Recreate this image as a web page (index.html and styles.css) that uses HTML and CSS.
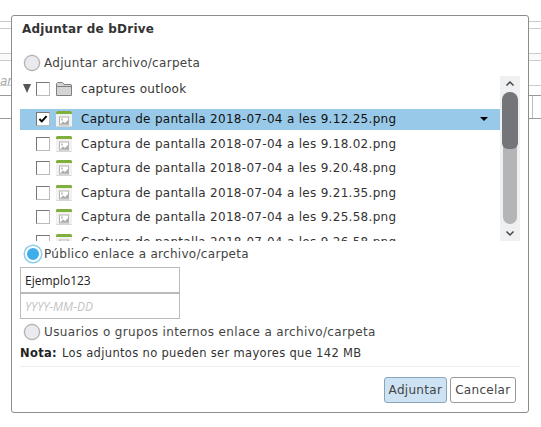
FILE: index.html
```html
<!DOCTYPE html>
<html lang="en">
<head>
  <meta charset="UTF-8"/>
  <title>Adjuntar de bDrive</title>
  <link rel="stylesheet" href="styles.css">
</head>
<body>

  <svg width="0" height="0" class="defs">
    <symbol id="img-file" viewBox="0 0 16 16">
      <rect x="0" y="0" width="16" height="16" rx="1.5" fill="#f1f1ef"/>
      <rect x="0.5" y="15" width="15" height="1" fill="#d6d6d4"/>
      <path d="M0 3V1.5A1.5 1.5 0 0 1 1.5 0h13A1.5 1.5 0 0 1 16 1.5V3z" fill="#7fb03c"/>
      <rect x="3.5" y="6" width="9" height="8" fill="#fff" stroke="#b4b4b4"/>
      <path d="M4 13.5l3-3 2 1.5 3-3v4.5z" fill="#aaa"/>
      <rect x="5" y="7.5" width="2" height="2" fill="#c4c4c4"/>
    </symbol>
  </svg>

  <div class="page-behind">
    <div class="bg-row"></div>
    <div class="bg-row"></div>
    <div class="bg-row bg-tall"><span class="bg-text">ar</span></div>
    <div class="bg-row bg-last"><span class="bg-cell"></span></div>
  </div>

  <div class="dialog">
    <h3 class="dialog-title">Adjuntar de bDrive</h3>

    <label class="radio-line first"><span class="radio"></span>Adjuntar archivo/carpeta</label>

    <div class="file-area">
      <div class="tree">
        <div class="row folder-row">
          <span class="arrow"></span>
          <span class="check"></span>
          <svg class="icon" viewBox="0 0 16 14" width="16" height="14">
            <path d="M.5 13.5V1.5l1-1h5l1.500 2h7l.5 .5v10.500z" fill="#d4d4d4" stroke="#808080"/>
            <path d="M.5 4.500h15" stroke="#808080" fill="none"/>
          </svg>
          <span class="name">captures outlook</span>
        </div>
        <div class="row selected">
          <span class="check checked"><svg viewBox="0 0 12 10" width="10" height="8"><path d="M1.500 5l3 3 6-6.500" fill="none" stroke="#000" stroke-width="2.400"/></svg></span>
          <svg class="icon"><use href="#img-file"/></svg>
          <span class="name">Captura de pantalla 2018-07-04 a les 9.12.25.png</span>
          <span class="row-menu"></span>
        </div>
        <div class="row">
          <span class="check"></span>
          <svg class="icon"><use href="#img-file"/></svg>
          <span class="name">Captura de pantalla 2018-07-04 a les 9.18.02.png</span>
        </div>
        <div class="row">
          <span class="check"></span>
          <svg class="icon"><use href="#img-file"/></svg>
          <span class="name">Captura de pantalla 2018-07-04 a les 9.20.48.png</span>
        </div>
        <div class="row">
          <span class="check"></span>
          <svg class="icon"><use href="#img-file"/></svg>
          <span class="name">Captura de pantalla 2018-07-04 a les 9.21.35.png</span>
        </div>
        <div class="row">
          <span class="check"></span>
          <svg class="icon"><use href="#img-file"/></svg>
          <span class="name">Captura de pantalla 2018-07-04 a les 9.25.58.png</span>
        </div>
        <div class="row">
          <span class="check"></span>
          <svg class="icon"><use href="#img-file"/></svg>
          <span class="name">Captura de pantalla 2018-07-04 a les 9.26.58.png</span>
        </div>
      </div>
      <div class="scrollbar">
        <svg class="scroll-btn" viewBox="0 0 20 16" width="20" height="16"><path d="M6.500 9.500l3.500-3.500 3.500 3.500" fill="none" stroke="#444" stroke-width="1.500"/></svg>
        <div class="scroll-track">
          <div class="scroll-thumb"></div>
        </div>
        <svg class="scroll-btn" viewBox="0 0 20 16" width="20" height="16"><path d="M6.500 6.500l3.500 3.500 3.500-3.500" fill="none" stroke="#444" stroke-width="1.500"/></svg>
      </div>
    </div>

    <label class="radio-line public"><span class="radio on"></span>Público enlace a archivo/carpeta</label>

    <div class="link-fields">
      <input type="text" class="field" value="Ejemplo123">
      <input type="text" class="field" placeholder="YYYY-MM-DD">
    </div>

    <label class="radio-line internal"><span class="radio"></span>Usuarios o grupos internos enlace a archivo/carpeta</label>

    <p class="note"><b>Nota:</b> Los adjuntos no pueden ser mayores que 142 MB</p>

    <div class="dialog-footer">
      <button class="btn primary">Adjuntar</button>
      <button class="btn">Cancelar</button>
    </div>
  </div>

</body>
</html>
```

FILE: styles.css
```css
html, body { margin: 0; padding: 0; height: 100%; overflow: hidden; }
body {
  background: #fff;
  color: #333;
  font-family: "DejaVu Sans", sans-serif;
  font-size: 12px;
  position: relative;
}
.defs { position: absolute; }

/* page under the dialog */
.page-behind { padding-top: 21px; }
.bg-row { height: 6px; border-top: 1px solid #ccc; border-bottom: 1px solid #ccc; margin-bottom: 24px; }
.bg-tall { height: 6px; position: relative; }
.bg-text { position: absolute; left: 0; top: -12px; color: #aaa; font-style: italic; }
.bg-row:nth-child(2) { height: 6px; background: #fafafa; margin-bottom: 24px; }
.bg-row:nth-child(3) { height: 9px; border-bottom-color: #999; margin-bottom: 0; border-top-color: #ccc; }
.bg-last { height: 22px; border-top: 0; border-bottom: 1px solid #999; background: none; position: relative; }
.bg-cell { position: absolute; right: 0; top: 0; width: 8px; height: 22px; border-left: 1px solid #bbb; }

/* dialog */
.dialog {
  position: absolute;
  left: 11px;
  top: 15px;
  width: 500px;
  height: 396px;
  padding: 0 8px;
  background: #fff;
  border: 1px solid #8c8c8c;
  border-radius: 3px;
  display: flex;
  flex-direction: column;
}
.dialog-title { margin: 0; padding: 5px 0 0 2px; height: 21px; font-size: 12px; line-height: 16px; font-weight: bold; color: #333; letter-spacing: .2px; }

.radio-line { display: flex; align-items: center; height: 18px; padding-left: 4px; font-size: 12px; color: #444; letter-spacing: .3px; }
.radio-line.first { margin-top: 12px; }
.radio-line.public { margin-top: 4px; }
.radio-line.internal { margin-top: 4px; letter-spacing: .36px; }
.radio {
  width: 14px; height: 14px;
  margin-right: 4px;
  border-radius: 50%;
  border: 1px solid #aaa;
  background: #e9e9ee;
  box-shadow: 0 0 0 .5px #ddd;
  flex: none;
}
.radio.on { background: #3daee9; border: 2px solid #fff; box-shadow: 0 0 0 1.500px #8ccbed; width: 12px; height: 12px; margin: 0 3px 0 1px; }

/* tree list */
.file-area { display: flex; height: 165px; margin-top: 4px; flex: none; }
.tree { width: 480px; height: 165px; overflow: hidden; }
.row { display: flex; align-items: center; height: 21px; margin-bottom: 3.500px; padding-left: 16px; color: #333; font-size: 12px; }
.folder-row { padding-left: 3px; margin-top: 2px; margin-bottom: 9.500px; }
.row.selected { background: #99c9e8; color: #111; }
.arrow { width: 0; height: 0; margin-right: 5px; border-left: 4.500px solid transparent; border-right: 4.500px solid transparent; border-top: 9px solid #555; flex: none; }
.check { width: 12px; height: 12px; border: 1px solid #777; border-right-color: #bbb; border-bottom-color: #bbb; background: #fff; flex: none; display: flex; align-items: center; justify-content: center; }
.icon { width: 16px; height: 16px; margin: 0 9px 0 6px; flex: none; }
.name { white-space: nowrap; letter-spacing: .3px; }
.row-menu { margin-left: auto; margin-right: 12px; border-left: 4px solid transparent; border-right: 4px solid transparent; border-top: 4px solid #000; }

/* scrollbar */
.scrollbar { width: 20px; background: #eff0f1; display: flex; flex-direction: column; flex: none; }
.scroll-btn { flex: none; }
.scroll-track { flex: 1; padding: 0 3px; position: relative; margin-bottom: 1px; }
.scroll-track::before { content: ""; position: absolute; left: 3px; right: 3px; top: 0; bottom: 0; background: #b4b5b6; border-radius: 7px; }
.scroll-thumb { position: absolute; left: 2px; right: 2px; top: 0; height: 57px; background: #737579; border-radius: 8px 8px 6px 6px; }

/* public link fields */
.link-fields { display: flex; flex-direction: column; width: 160px; margin-top: 4px; }
.field { box-sizing: border-box; width: 160px; height: 26px; margin: 0; padding: 0 4px; border: 1px solid #bbb; font: 12px "Open Sans", sans-serif; color: #222; outline: none; }
.field::placeholder { color: #c4c4c4; font-style: italic; }

.note { margin: 3px 0 0; height: 22px; line-height: 18px; font-size: 11.500px; color: #333; border-bottom: 1px solid #eee; letter-spacing: .33px; }
.note b { color: #222; margin-right: 1px; }

.dialog-footer { display: flex; justify-content: flex-end; gap: 3px; padding: 10px 4px 0 0; }
.btn { height: 26px; padding: 0 4.500px; border: 1px solid #999; border-radius: 3px; background: #fff; color: #444; font: 12px "DejaVu Sans", sans-serif; letter-spacing: .3px; }
.btn.primary { background: #cde3f3; border-color: #8aa6bb; padding: 0 3.500px; }
```
